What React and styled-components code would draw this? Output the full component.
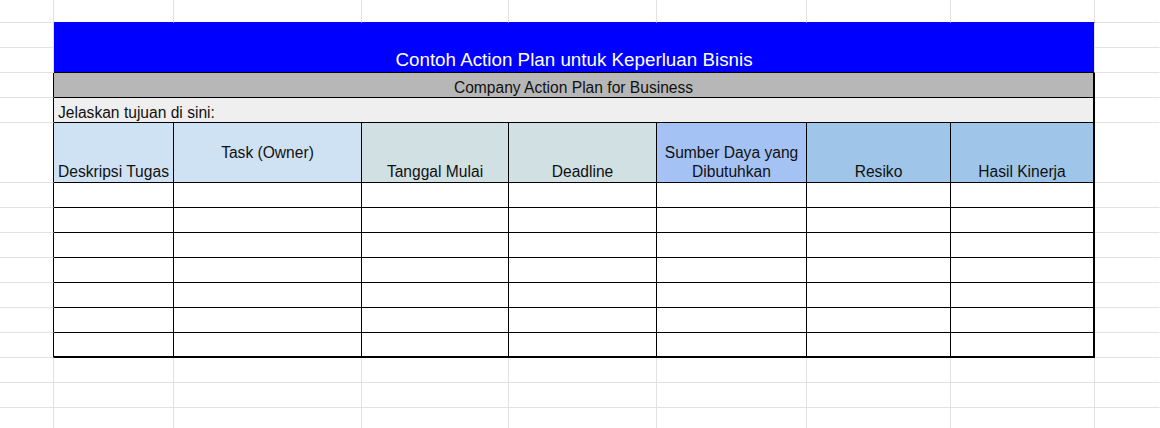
import React from "react";
import styled, { createGlobalStyle } from "styled-components";

const GRID = "#e2e2e2";
const INK = "#000";

const GlobalStyle = createGlobalStyle`
  html, body {
    margin: 0;
    padding: 0;
    background: #fff;
    overflow: hidden;
  }
  body {
    font-family: "Liberation Sans", Arial, sans-serif;
  }
`;

// sheet geometry: widths/heights include the cell's own right/bottom border
const Sheet = styled.div`
  display: grid;
  grid-template-columns: 54px 120px 188px 147px 148px 150px 144px 144px 1fr;
  grid-template-rows: 23px 25px 25px 25px 25px 60px repeat(7, 25px) 25px 25px 25px;
  width: 1160px;
  height: 428px;
  overflow: hidden;
`;

const Cell = styled.div`
  box-sizing: border-box;
  grid-column: ${(p) => p.$col};
  grid-row: ${(p) => p.$row};
  display: flex;
  justify-content: ${(p) =>
    p.$align === "center" ? "center" : p.$align === "right" ? "flex-end" : "flex-start"};
  align-items: ${(p) => (p.$valign === "middle" ? "center" : "flex-end")};
  text-align: ${(p) => p.$align || "left"};
  background: ${(p) => p.$bg || "#fff"};
  border-right: ${(p) => p.$rw || 1}px solid ${(p) => p.$right || GRID};
  border-bottom: ${(p) => p.$bw || 1}px solid ${(p) => p.$bottom || GRID};
  padding: 0 4px ${(p) => p.$pb || 0}px;
  color: ${(p) => p.$color || "#111"};
  font-size: ${(p) => p.$size || 15.6}px;
  line-height: ${(p) => p.$lh || 19}px;
  white-space: ${(p) => (p.$wrap ? "normal" : "nowrap")};
  overflow: visible;
`;

const headers = [
  { text: "Deskripsi Tugas", bg: "#cfe2f3", align: "left" },
  { text: "Task (Owner)", bg: "#cfe2f3", align: "center", valign: "middle" },
  { text: "Tanggal Mulai", bg: "#d0e0e3", align: "center" },
  { text: "Deadline", bg: "#d0e0e3", align: "center" },
  { text: "Sumber Daya yang Dibutuhkan", bg: "#a4c2f4", align: "center", wrap: true },
  { text: "Resiko", bg: "#9fc5e8", align: "center" },
  { text: "Hasil Kinerja", bg: "#9fc5e8", align: "center" },
];

// empty edge cells left and right of the table
const Edge = ({ row, col, inTable }) => (
  <Cell
    $row={row}
    $col={col}
    $right={col === 1 ? (inTable ? INK : GRID) : "transparent"}
  />
);

const App = () => {
  const dataRows = [7, 8, 9, 10, 11, 12, 13];
  const blankRows = [14, 15, 16];

  return (
    <>
      <GlobalStyle />
      <Sheet>
        {/* top row */}
        {Array.from({ length: 9 }, (_, i) => (
          <Cell
            key={`top-${i}`}
            $row={1}
            $col={i + 1}
            $right={i === 8 ? "transparent" : GRID}
            $bottom={i >= 1 && i <= 7 ? "#0000ff" : GRID}
          />
        ))}

        {/* title */}
        <Edge row={2} col={1} />
        <Edge row={3} col={1} />
        <Cell
          $row="2 / 4"
          $col="2 / 9"
          $bg="#0000ff"
          $bottom={INK}
          $align="center"
          $color="#fff"
          $size={18.8}
          $lh={22}
          $pb={1}
        >
          Contoh Action Plan untuk Keperluan Bisnis
        </Cell>
        <Edge row={2} col={9} />
        <Edge row={3} col={9} />

        {/* subtitle */}
        <Edge row={4} col={1} inTable />
        <Cell $row={4} $col="2 / 9" $bg="#b7b7b7" $right={INK} $rw={2} $bottom={INK} $align="center">
          Company Action Plan for Business
        </Cell>
        <Edge row={4} col={9} />

        {/* goal line */}
        <Edge row={5} col={1} inTable />
        <Cell $row={5} $col="2 / 9" $bg="#efefef" $right={INK} $rw={2} $bottom={INK}>
          Jelaskan tujuan di sini:
        </Cell>
        <Edge row={5} col={9} />

        {/* column headers */}
        <Edge row={6} col={1} inTable />
        {headers.map((h, i) => (
          <Cell
            key={h.text}
            $row={6}
            $col={i + 2}
            $bg={h.bg}
            $right={INK}
            $rw={i === 6 ? 2 : 1}
            $bottom={INK}
            $align={h.align}
            $valign={h.valign}
            $wrap={h.wrap}
            $lh={h.wrap ? 18.5 : 19}
            $pb={1}
          >
            {h.text}
          </Cell>
        ))}
        <Edge row={6} col={9} />

        {/* empty data rows */}
        {dataRows.map((r) => (
          <React.Fragment key={r}>
            <Edge row={r} col={1} inTable />
            {headers.map((h, i) => (
              <Cell
                key={`${r}-${i}`}
                $row={r}
                $col={i + 2}
                $right={INK}
                $rw={i === 6 ? 2 : 1}
                $bottom={INK}
                $bw={r === 13 ? 2 : 1}
              />
            ))}
            <Edge row={r} col={9} />
          </React.Fragment>
        ))}

        {/* sheet below the table */}
        {blankRows.map((r) =>
          Array.from({ length: 9 }, (_, i) => (
            <Cell
              key={`b-${r}-${i}`}
              $row={r}
              $col={i + 1}
              $right={i === 8 ? "transparent" : GRID}
            />
          ))
        )}
      </Sheet>
    </>
  );
};

export default App;
